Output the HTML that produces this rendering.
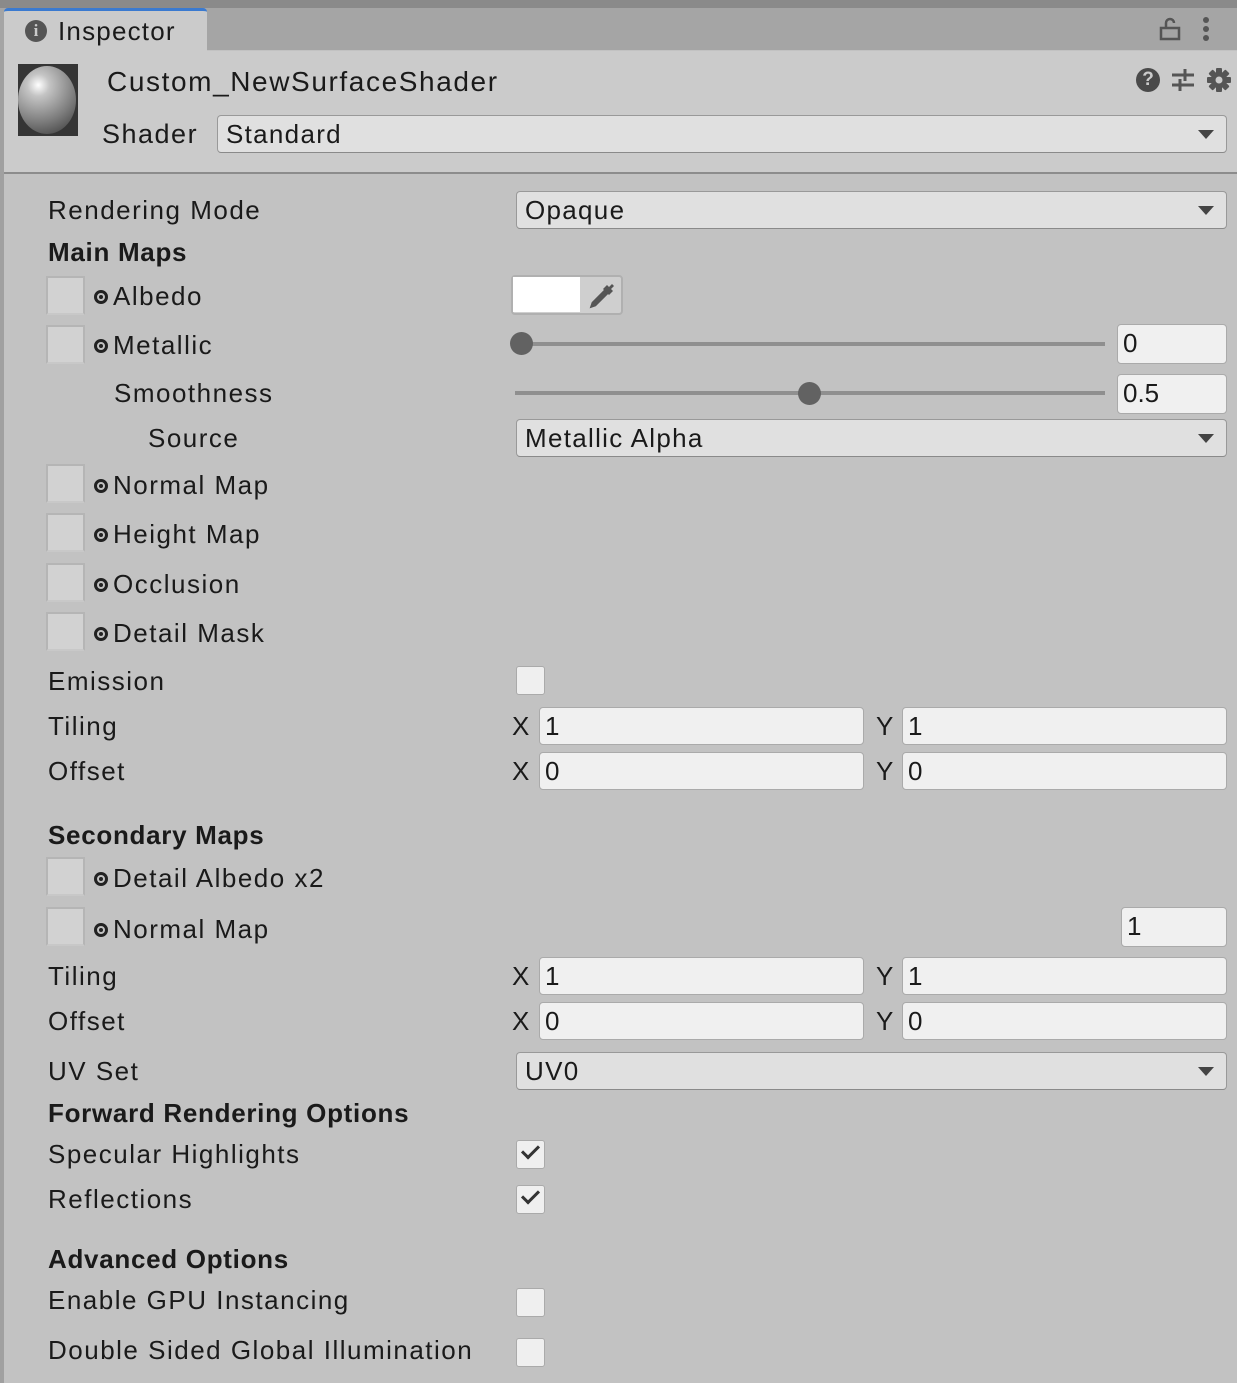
<!DOCTYPE html>
<html><head><meta charset="utf-8"><style>
*{margin:0;padding:0;box-sizing:border-box}
body{width:1237px;height:1383px;overflow:hidden;background:#c2c2c2;font-family:"Liberation Sans",sans-serif;color:#1a1a1a;position:relative}
.a{position:absolute}
.t{position:absolute;font-size:26px;line-height:30px;white-space:nowrap;letter-spacing:1.5px}
.b{font-weight:bold;letter-spacing:0.7px}
.dd{position:absolute;background:#e0e0e0;border:1px solid #999;border-bottom-color:#8a8a8a;border-radius:4px;height:38px;font-size:26px;line-height:36px;padding-left:8px;letter-spacing:1.3px}
.dd:after{content:"";position:absolute;right:12px;top:14px;border-left:8px solid transparent;border-right:8px solid transparent;border-top:9px solid #444}
.in{position:absolute;background:#f0f0f0;border:1px solid #aaa;border-radius:4px;height:38px;font-size:26px;line-height:36px;padding-left:5px}
.slot{position:absolute;left:46px;width:39px;height:39px;background:#d2d2d2;border:2px solid #b5b5b5;border-bottom-color:#c8c8c8}
.cb{position:absolute;left:516px;width:29px;height:29px;background:#efefef;border:1px solid #aaa;border-radius:3px}
.dot{display:inline-block;width:14px;height:14px;border:3px solid #222;border-radius:50%;margin-right:5px;vertical-align:1px;position:relative}
.dot:after{content:"";position:absolute;left:2px;top:2px;width:4px;height:4px;background:#222;border-radius:50%}
.track{position:absolute;height:4px;background:#8f8f8f}
.knob{position:absolute;width:23px;height:23px;border-radius:50%;background:#626262}
.chk{position:absolute;left:5px;top:4px;width:17px;height:10px;border-left:3px solid #333;border-bottom:3px solid #333;transform:rotate(-45deg)}
</style></head><body>
<div class="a" style="left:0;top:0;width:1237px;height:8px;background:#8a8a8a"></div>
<div class="a" style="left:0;top:8px;width:1237px;height:42px;background:#a5a5a5"></div>
<div class="a" style="left:0;top:50px;width:4px;height:1333px;background:#a0a0a0"></div>
<div class="a" style="left:4px;top:8px;width:203px;height:43px;background:#cbcbcb;border-top:3px solid #3a7ad0;border-radius:4px 4px 0 0"></div>
<div class="a" style="left:25px;top:20px;width:22px;height:22px;border-radius:50%;background:#555;color:#cbcbcb;font:bold 17px/22px 'Liberation Serif',serif;text-align:center">i</div>
<div class="t" style="left:58px;top:16px;letter-spacing:1.2px">Inspector</div>
<svg class="a" style="left:1158px;top:16px" width="24" height="26"><path d="M3 12h18v11H3zM8 12V7a4 4 0 0 1 8 0" fill="none" stroke="#555" stroke-width="2.5"/></svg>
<div class="a" style="left:1203px;top:17px;width:6px;height:6px;border-radius:50%;background:#555;box-shadow:0 9px 0 #555,0 18px 0 #555"></div>
<div class="a" style="left:4px;top:51px;width:1233px;height:122px;background:#cbcbcb"></div>
<div class="a" style="left:4px;top:172px;width:1233px;height:2px;background:#8c8c8c"></div>
<div class="a" style="left:18px;top:64px;width:60px;height:72px;background:#353535"></div>
<div class="a" style="left:18px;top:66px;width:58px;height:68px;border-radius:50%;background:radial-gradient(circle at 35% 28%,#fff 0,#c4c4c4 18%,#7c7c7c 60%,#333 100%)"></div>
<div class="t" style="left:107px;top:67px;font-size:28px;letter-spacing:1.6px">Custom_NewSurfaceShader</div>
<div class="a" style="left:1136px;top:68px;width:24px;height:24px;border-radius:50%;background:#4a4a4a;color:#cbcbcb;font:bold 19px/24px 'Liberation Sans',sans-serif;text-align:center">?</div>
<svg class="a" style="left:1170px;top:66px" width="26" height="28"><path d="M2 9h22M2 19h22M15 3v12M10 13v12" stroke="#555" stroke-width="3"/></svg>
<svg class="a" style="left:1206px;top:67px" width="26" height="26" viewBox="0 0 26 26"><g fill="#555"><circle cx="13" cy="13" r="8"/><rect x="10" y="1" width="6" height="24" rx="1"/><rect x="10" y="1" width="6" height="24" rx="1" transform="rotate(45 13 13)"/><rect x="10" y="1" width="6" height="24" rx="1" transform="rotate(90 13 13)"/><rect x="10" y="1" width="6" height="24" rx="1" transform="rotate(135 13 13)"/></g><circle cx="13" cy="13" r="3.5" fill="#cbcbcb"/></svg>
<div class="t" style="left:102px;top:119px;font-size:27px">Shader</div>
<div class="dd" style="left:217px;top:115px;width:1010px">Standard</div>

<div class="t" style="left:48px;top:195px">Rendering Mode</div>
<div class="dd" style="left:516px;top:191px;width:711px">Opaque</div>
<div class="t b" style="left:48px;top:237px">Main Maps</div>

<div class="slot" style="top:276px"></div>
<div class="t" style="left:94px;top:281px"><span class="dot"></span>Albedo</div>
<div class="a" style="left:511px;top:275px;width:112px;height:40px;border:2px solid #b0b0b0;border-radius:4px;background:#cfcfcf"></div>
<div class="a" style="left:513px;top:277px;width:67px;height:35px;background:#fff"></div>
<svg class="a" style="left:588px;top:280px" width="28" height="30"><path d="M6 24l11-11M4 26l3-1 12-12-2-2L5 23z" stroke="#555" stroke-width="3" fill="none"/><path d="M15 9l4-4 2 2 3-3 2 2-3 3 2 2-4 4z" fill="#555"/></svg>

<div class="slot" style="top:325px"></div>
<div class="t" style="left:94px;top:330px"><span class="dot"></span>Metallic</div>
<div class="track" style="left:516px;top:342px;width:589px"></div>
<div class="knob" style="left:510px;top:332px"></div>
<div class="in" style="left:1117px;top:324px;width:110px;height:40px">0</div>

<div class="t" style="left:114px;top:378px">Smoothness</div>
<div class="track" style="left:515px;top:391px;width:590px"></div>
<div class="knob" style="left:798px;top:382px"></div>
<div class="in" style="left:1117px;top:374px;width:110px;height:40px">0.5</div>

<div class="t" style="left:148px;top:423px">Source</div>
<div class="dd" style="left:516px;top:419px;width:711px">Metallic Alpha</div>

<div class="slot" style="top:464px"></div>
<div class="t" style="left:94px;top:470px"><span class="dot"></span>Normal Map</div>
<div class="slot" style="top:513px"></div>
<div class="t" style="left:94px;top:519px"><span class="dot"></span>Height Map</div>
<div class="slot" style="top:563px"></div>
<div class="t" style="left:94px;top:569px"><span class="dot"></span>Occlusion</div>
<div class="slot" style="top:612px"></div>
<div class="t" style="left:94px;top:618px"><span class="dot"></span>Detail Mask</div>

<div class="t" style="left:48px;top:666px">Emission</div>
<div class="cb" style="top:666px"></div>

<div class="t" style="left:48px;top:711px">Tiling</div>
<div class="t" style="left:512px;top:711px">X</div>
<div class="in" style="left:539px;top:707px;width:325px">1</div>
<div class="t" style="left:876px;top:711px">Y</div>
<div class="in" style="left:902px;top:707px;width:325px">1</div>
<div class="t" style="left:48px;top:756px">Offset</div>
<div class="t" style="left:512px;top:756px">X</div>
<div class="in" style="left:539px;top:752px;width:325px">0</div>
<div class="t" style="left:876px;top:756px">Y</div>
<div class="in" style="left:902px;top:752px;width:325px">0</div>

<div class="t b" style="left:48px;top:820px">Secondary Maps</div>
<div class="slot" style="top:857px"></div>
<div class="t" style="left:94px;top:863px"><span class="dot"></span>Detail Albedo x2</div>
<div class="slot" style="top:907px"></div>
<div class="t" style="left:94px;top:914px"><span class="dot"></span>Normal Map</div>
<div class="in" style="left:1121px;top:907px;width:106px;height:40px">1</div>

<div class="t" style="left:48px;top:961px">Tiling</div>
<div class="t" style="left:512px;top:961px">X</div>
<div class="in" style="left:539px;top:957px;width:325px">1</div>
<div class="t" style="left:876px;top:961px">Y</div>
<div class="in" style="left:902px;top:957px;width:325px">1</div>
<div class="t" style="left:48px;top:1006px">Offset</div>
<div class="t" style="left:512px;top:1006px">X</div>
<div class="in" style="left:539px;top:1002px;width:325px">0</div>
<div class="t" style="left:876px;top:1006px">Y</div>
<div class="in" style="left:902px;top:1002px;width:325px">0</div>

<div class="t" style="left:48px;top:1056px">UV Set</div>
<div class="dd" style="left:516px;top:1052px;width:711px">UV0</div>

<div class="t b" style="left:48px;top:1098px">Forward Rendering Options</div>
<div class="t" style="left:48px;top:1139px">Specular Highlights</div>
<div class="cb" style="top:1140px"><div class="chk"></div></div>
<div class="t" style="left:48px;top:1184px">Reflections</div>
<div class="cb" style="top:1185px"><div class="chk"></div></div>

<div class="t b" style="left:48px;top:1244px">Advanced Options</div>
<div class="t" style="left:48px;top:1285px">Enable GPU Instancing</div>
<div class="cb" style="top:1288px"></div>
<div class="t" style="left:48px;top:1335px">Double Sided Global Illumination</div>
<div class="cb" style="top:1338px"></div>
</body></html>
